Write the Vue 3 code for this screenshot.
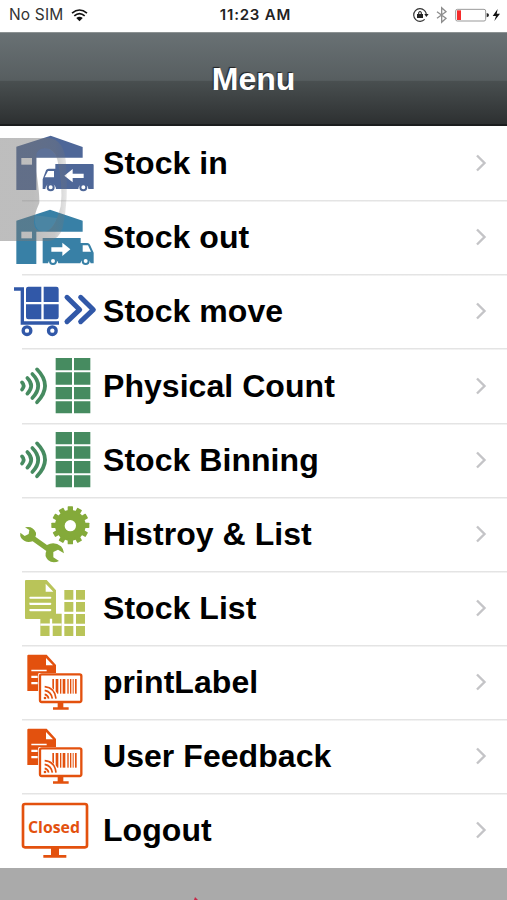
<script setup>
const rows = [
  { label: 'Stock in', icon: 'in', top: 3 },
  { label: 'Stock out', icon: 'out', top: 0 },
  { label: 'Stock move', icon: 'move', top: -2 },
  { label: 'Physical Count', icon: 'scan', top: -3 },
  { label: 'Stock Binning', icon: 'scan', top: -3 },
  { label: 'Histroy & List', icon: 'tools', top: -1 },
  { label: 'Stock List', icon: 'list', top: 3 },
  { label: 'printLabel', icon: 'print', top: 0 },
  { label: 'User Feedback', icon: 'print', top: 0 },
  { label: 'Logout', icon: 'closed', top: 1 },
]
const bars = [[157, 6], [167, 9], [180, 5], [188, 9], [202, 5], [210, 5], [218, 4], [225, 6]]
const teeth = Array.from({ length: 12 }, (_, i) => i * 30)
</script>

<template>
  <main class="screen">
    <header class="status">
      <div class="carrier">
        <span>No SIM</span>
        <svg class="wifi" viewBox="0 0 50 40" fill="none" stroke="#111" stroke-width="5">
          <path d="M2 13Q25-7 48 13M9 21Q25 7 41 21" />
          <path d="M15 28Q25 19 35 28L25 38Z" fill="#111" stroke="none" />
        </svg>
      </div>
      <span class="time">11:23 AM</span>
      <svg class="indicators" viewBox="0 0 270 60">
        <g fill="none" stroke="#333" stroke-width="3.5">
          <path d="M37 16A19 19 0 1 0 38 43M29 12Q42 16 43 29" />
          <path d="M20 28V23Q24 16 28 23V28" />
        </g>
        <path d="M15 27H33V39H15ZM37 27H50L43 36Z" fill="#222" />
        <path d="M75 20L102 40L89 52V8L102 20L75 40" fill="none" stroke="#8d8d8d" stroke-width="4" />
        <rect x="131" y="13" width="90" height="35" rx="5" fill="white" stroke="#999" stroke-width="3" />
        <path d="M135 16H147V45H135Z" fill="#f52b2b" />
        <path d="M224 24Q231 25 231 30Q231 36 224 37Z" fill="#222" />
        <path d="M257 12L242 33H252L247 48L264 26H254Z" fill="#111" />
      </svg>
    </header>
    <div class="navbar"><h1>Menu</h1></div>
    <nav class="menu">
      <a v-for="row in rows" :key="row.label" class="row">
        <svg class="icon" :viewBox="`0 ${row.top} 306 222`">
          <g v-if="row.icon === 'in'" fill="#4e6798">
            <path d="M49 65L152 32L248 66V98H109V195H49Z" />
            <path d="M64 99H96V119H64Z" fill="white" />
            <path d="M170 117H278Q281 117 281 121V192H265A15 15 0 0 0 235 192H168A16 16 0 0 0 136 192H128V163L138 136Q140 131 146 131H166V117Z" />
            <path d="M144 138H162V157H134Z" fill="white" />
            <path d="M193 152L218 132V146H251V159H218V172Z" fill="white" />
            <g fill="white" stroke="#4e6798" stroke-width="6"><circle cx="152" cy="187" r="9" /><circle cx="250" cy="187" r="9" /></g>
          </g>
          <g v-else-if="row.icon === 'out'" fill="#3880a6">
            <path d="M49 62L150 29L248 62V95H109V192H49Z" />
            <path d="M64 95H96V115H64Z" fill="white" />
            <path d="M128 114H242V129H262Q268 129 270 134L281 158V190H272A16 16 0 0 0 241 190H175A16 16 0 0 0 144 190H128Z" />
            <path d="M248 136H264L273 155H248Z" fill="white" />
            <path d="M211 148L187 128V142H154V155H187V168Z" fill="white" />
            <g fill="white" stroke="#3880a6" stroke-width="6"><circle cx="159" cy="183" r="9" /><circle cx="257" cy="183" r="9" /></g>
          </g>
          <g v-else-if="row.icon === 'move'" fill="#3158a8">
            <path d="M85 36H124V82H78V43Q78 36 85 36M131 36H169Q176 36 176 43V82H131ZM78 89H124V134H85Q78 134 78 127ZM131 89H176V127Q176 134 169 134H131Z" />
            <path d="M42 43H67V145H177" fill="none" stroke="#3158a8" stroke-width="10" />
            <g fill="white" stroke="#3158a8" stroke-width="10"><circle cx="81" cy="168" r="11.5" /><circle cx="157" cy="168" r="11.5" /></g>
            <path d="M201 68L239 105L201 141M242 68L280 105L242 141" fill="none" stroke="#3158a8" stroke-width="15" stroke-linecap="round" stroke-linejoin="round" />
          </g>
          <g v-else-if="row.icon === 'scan'" fill="#468b60">
            <path d="M167 24H216V61H167ZM222 24H271V61H222ZM167 67H216V104H167ZM222 67H271V104H222ZM167 111H216V148H167ZM222 111H271V148H222ZM167 154H216V190H167ZM222 154H271V190H222Z" />
            <path d="M111 58Q159 107 111 157M97 72Q132 107 97 144M82 84Q105 107 82 131M66 97Q76 107 66 119" fill="none" stroke="#468b60" stroke-width="11" stroke-linecap="round" />
          </g>
          <g v-else-if="row.icon === 'tools'" fill="#84aa3a">
            <circle cx="211" cy="84" r="46" />
            <rect v-for="angle in teeth" :key="angle" x="203" y="27" width="16" height="18" rx="2" :transform="`rotate(${angle} 211 84)`" />
            <circle cx="211" cy="85" r="17" fill="white" />
            <path d="M75 90Q98 84 108 106Q109 114 106 118L141 143Q163 131 183 147Q191 155 192 168L174 157L160 164V180L177 191Q158 200 144 188Q132 175 139 161L98 132Q77 139 64 123Q59 115 61 106L74 116L86 110L88 98Z" />
          </g>
          <g v-else-if="row.icon === 'list'" fill="#b9c459">
            <path d="M78 30H140L168 61V131H185V198H158V163H149V198H121V147H78Q75 147 75 144V33Q75 30 78 30Z" />
            <path d="M137 41V65H160ZM91 80H151Q154 80 154 83T151 86H91Q88 86 88 83T91 80M91 98H151Q154 98 154 101T151 105H91Q88 105 88 101T91 98M91 117H151Q154 117 154 120T151 124H91Q88 124 88 120T91 117" fill="white" />
            <path d="M153 146V198M121 164H185" stroke="white" stroke-width="7" />
            <path d="M193 60H220V89H193ZM228 60H255V89H228ZM193 96H220V125H193ZM228 96H255V125H228ZM193 132H220V161H193ZM228 132H255V161H228ZM193 168H220V198H193ZM228 168H255V198H228Z" />
          </g>
          <g v-else-if="row.icon === 'print'" fill="#e3510e">
            <path d="M85 29H140L168 60V85H115V138H82V32Q82 29 85 29Z" />
            <path d="M138 39V61H159ZM94 74H140V79H94ZM94 92H113V99H94ZM94 111H113V118H94Z" fill="white" />
            <rect x="115" y="84" width="132" height="92" rx="8" fill="white" />
            <rect x="120" y="88" width="124" height="83" rx="5" fill="white" stroke="#e3510e" stroke-width="7" />
            <path d="M173 174H190V187H206V194H159V187H173Z" />
            <rect v-for="([x, w]) in bars" :key="x" :x="x" y="102" :width="w - 1" height="44" />
            <path d="M130 118H146L171 144V163H130Z" fill="white" />
            <path d="M134 125Q165 128 168 161M134 136Q154 140 157 161M134 148Q144 150 146 161" fill="none" stroke="#e3510e" stroke-width="5" />
            <circle cx="135" cy="159" r="4" />
          </g>
          <g v-else fill="#e3510e">
            <rect x="69" y="34" width="192" height="130" rx="6" fill="white" stroke="#e3510e" stroke-width="8" />
            <path d="M153 166H177V187H199V195H130V187H153Z" />
            <text x="84" y="121" textLength="156" lengthAdjust="spacingAndGlyphs" class="closed">Closed</text>
          </g>
        </svg>
        <span class="label">{{ row.label }}</span>
        <svg class="chevron" viewBox="0 0 12 20"><path d="M2 2.5L9.5 10L2 17.5" /></svg>
      </a>
      <svg class="shade" viewBox="0 0 210 330">
        <defs>
          <linearGradient id="fade" gradientUnits="userSpaceOnUse" x1="0" y1="0" x2="205" y2="0">
            <stop offset=".48" stop-color="#777" stop-opacity=".48" />
            <stop offset=".8" stop-color="#777" stop-opacity=".4" />
            <stop offset="1" stop-color="#777" stop-opacity=".15" />
          </linearGradient>
        </defs>
        <path fill="url(#fade)" fill-rule="evenodd" d="M0 0H145Q193 4 198 75Q207 185 188 270Q177 306 145 309H0ZM109 54V100Q119 170 118 195Q102 230 102 254Q104 285 139 280Q166 270 182 205Q190 142 172 65Q160 29 133 31Q109 33 109 54Z" />
        <path fill="#999" opacity=".2" d="M109 54V60H171Q160 29 133 31Q109 33 109 54ZM106 232Q98 285 139 280Q159 273 171 240Z" />
      </svg>
    </nav>
    <footer class="footer"><svg class="mark" viewBox="0 0 6 3"><path d="M1 3L2 0L5 3Z" /></svg></footer>
  </main>
</template>

<style>
body { margin: 0; overflow: hidden; }
</style>

<style scoped>
.screen { width: 507px; height: 900px; display: flex; flex-direction: column; overflow: hidden; background: #fff; font-family: "Liberation Sans", Arial, sans-serif; color: #000; }
.status { height: 32px; flex: none; display: grid; grid-template-columns: 1fr auto 1fr; align-items: center; font: 15.5px/30px Inter, sans-serif; box-sizing: border-box; padding: 0 5px 2px 9px; }
.carrier { display: flex; align-items: center; gap: 8px; color: #333; letter-spacing: .15px; }
.wifi { width: 17px; height: 13px; }
.time { font-weight: 600; font-size: 15px; letter-spacing: .8px; color: #222; }
.indicators { width: 90px; height: 20px; justify-self: end; }
.navbar { height: 94px; flex: none; box-sizing: border-box; display: flex; justify-content: center; align-items: center; border-top: 1px solid #8c9293; border-bottom: 2px solid #1b1d1e; background: linear-gradient(#697174 0%, #575e60 52%, #494f50 53%, #2d3031 100%); }
h1 { margin: 0; font-size: 32px; line-height: 38px; color: #fff; text-shadow: -1px -1px 1px #222; }
.menu { height: 741.5px; flex: none; position: relative; display: flex; flex-direction: column; }
.row { flex: 1; min-height: 0; display: flex; align-items: center; background: linear-gradient(#e4e4e4, #e4e4e4) 22px 0 / 485px 1.5px no-repeat; }
.row:first-child { background: none; }
.icon { width: 102px; height: 74px; flex: none; }
.label { flex: 1; padding-left: 1px; font-size: 32px; line-height: 40px; font-weight: 700; white-space: nowrap; letter-spacing: .05px; }
.chevron { width: 12px; height: 20px; margin-right: 20px; fill: none; stroke: #c4c4c7; stroke-width: 2.4; }
.closed { font: 700 49px "Open Sans", "Noto Sans", sans-serif; }
.shade { position: absolute; left: 0; top: 12px; width: 70px; height: 110px; }
.footer { flex: 1; display: flex; align-items: flex-end; background: #aaa; }
.mark { width: 6px; height: 3px; margin-left: 193px; fill: #c52848; }
</style>
